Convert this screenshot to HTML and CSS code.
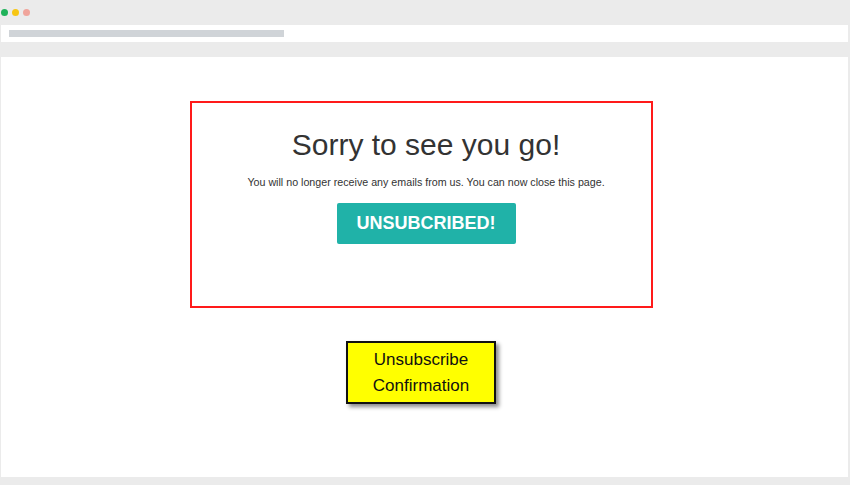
FILE: index.html
```html
<!DOCTYPE html>
<html lang="en">
<head>
    <meta charset="UTF-8">
    <meta name="viewport" content="width=device-width, initial-scale=1.0">
    <title>Unsubscribe Confirmation</title>
    <link rel="stylesheet" href="styles.css">
</head>
<body>

    <div class="browser-top">
        <span class="dot green"></span>
        <span class="dot yellow"></span>
        <span class="dot pink"></span>
    </div>

    <div class="address-bar">
        <div class="address-line"></div>
    </div>

    <div class="page">
        <div class="unsub-box">
            <h1>Sorry to see you go!</h1>
            <p>You will no longer receive any emails from us. You can now close this page.</p>
            <button>UNSUBCRIBED!</button>
        </div>

        <div class="label-note">
            Unsubscribe<br>Confirmation
        </div>
    </div>

</body>
</html>
```

FILE: styles.css
```css
* {
    margin: 0;
    padding: 0;
    box-sizing: border-box;
}

body {
    font-family: "Liberation Sans", Arial, sans-serif;
    background: #ebebeb;
    width: 850px;
    height: 485px;
    overflow: hidden;
}

.browser-top {
    height: 25px;
    display: flex;
    align-items: center;
    gap: 4px;
    padding-left: 1px;
    padding-bottom: 1px;
}

.dot {
    width: 7px;
    height: 7px;
    border-radius: 50%;
}

.green { background: #1fb25a; }
.yellow { background: #f7c613; }
.pink { background: #f0a49b; }

.address-bar {
    margin: 0 2px 0 1px;
    height: 17px;
    background: #fff;
    padding: 5px 0 0 8px;
}

.address-line {
    width: 275px;
    height: 7px;
    background: #d0d4d8;
}

.page {
    margin: 15px 2px 0 1px;
    height: 420px;
    background: #fff;
    display: flex;
    flex-direction: column;
    align-items: center;
    padding: 44px 7px 0 0;
}

/* el contenido va un poco corrido a la derecha dentro del marco */
.unsub-box {
    width: 463px;
    height: 207px;
    border: 2px solid #ff1a1a;
    text-align: center;
    padding: 24px 0 0 10px;
}

h1 {
    font-size: 30px;
    font-weight: normal;
    color: #333;
    line-height: 36px;
}

p {
    font-size: 10.7px;
    color: #333;
    margin-top: 13px;
}

button {
    margin-top: 15px;
    width: 179px;
    height: 41px;
    background: #20b2a8;
    color: #fff;
    border: none;
    border-radius: 2px;
    font-family: "Liberation Sans", Arial, sans-serif;
    font-size: 18px;
    font-weight: bold;
}

.label-note {
    margin-top: 33px;
    width: 150px;
    height: 63px;
    background: #ffff00;
    border: 2px solid #111;
    box-shadow: 3px 3px 4px rgba(0, 0, 0, 0.45);
    text-align: center;
    font-size: 17px;
    line-height: 26px;
    color: #111;
    padding-top: 4px;
}
```
